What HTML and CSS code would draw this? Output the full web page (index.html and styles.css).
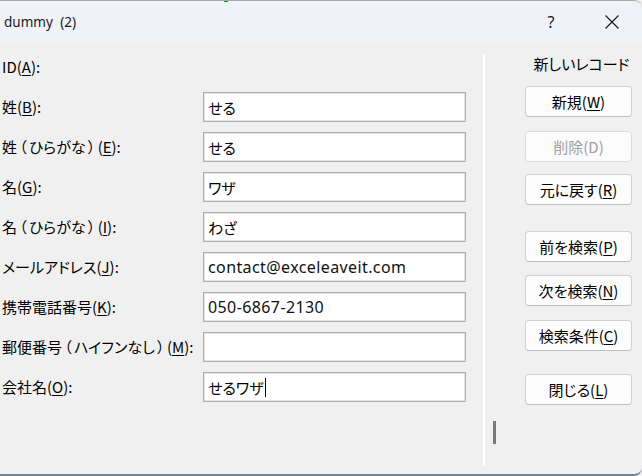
FILE: index.html
```html
<!DOCTYPE html>
<html lang="ja">
<head>
<meta charset="utf-8">
<title>dummy (2)</title>
<link rel="stylesheet" href="styles.css">
</head>
<body>
<div class="window">
  <div class="titlebar">
    <span class="green-mark"></span>
    <div class="title">dummy <span class="gap"></span>(2)</div>
    <div class="tb-btn help">?</div>
    <div class="tb-btn close">
      <svg width="16" height="16" viewBox="0 0 16 16"><path d="M1.5 1.5 L14.5 14.5 M14.5 1.5 L1.5 14.5" stroke="#1a1a1a" stroke-width="1.2" fill="none"/></svg>
    </div>
  </div>
  <div class="body">
    <div class="form">
      <div class="row"><div class="label">ID(<u>A</u>):</div></div>
      <div class="row"><div class="label">姓(<u>B</u>):</div><div class="field">せる</div></div>
      <div class="row"><div class="label">姓<span class="fp">（</span>ひらがな<span class="fp">）</span>(<u>E</u>):</div><div class="field">せる</div></div>
      <div class="row"><div class="label">名(<u>G</u>):</div><div class="field">ワザ</div></div>
      <div class="row"><div class="label">名<span class="fp">（</span>ひらがな<span class="fp">）</span>(<u>I</u>):</div><div class="field">わざ</div></div>
      <div class="row"><div class="label">メールアドレス(<u>J</u>):</div><div class="field latin">contact@exceleaveit.com</div></div>
      <div class="row"><div class="label">携帯電話番号(<u>K</u>):</div><div class="field latin">050-6867-2130</div></div>
      <div class="row"><div class="label">郵便番号<span class="fp">（</span>ハイフンなし<span class="fp">）</span>(<u>M</u>):</div><div class="field"></div></div>
      <div class="row"><div class="label">会社名(<u>O</u>):</div><div class="field">せるワザ<span class="caret"></span></div></div>
    </div>
    <div class="divider"></div>
    <div class="side">
      <div class="side-title">新しいレコード</div>
      <div class="btn b-new">新規(<u>W</u>)</div>
      <div class="btn b-del disabled">削除(D)</div>
      <div class="btn b-undo">元に戻す(<u>R</u>)</div>
      <div class="btn b-prev">前を検索(<u>P</u>)</div>
      <div class="btn b-next">次を検索(<u>N</u>)</div>
      <div class="btn b-crit">検索条件(<u>C</u>)</div>
      <div class="btn b-close">閉じる(<u>L</u>)</div>
      <div class="side-caret"></div>
    </div>
  </div>
</div>
</body>
</html>
```

FILE: styles.css
```css
html, body {
  margin: 0;
  padding: 0;
  background: #f0f0f0;
}
body {
  font-family: "Noto Sans CJK JP", "Noto Sans", sans-serif;
  font-size: 15px;
  color: #000;
  font-feature-settings: "palt";
}
.window {
  position: relative;
  width: 642px;
  height: 476px;
  box-sizing: border-box;
  display: flex;
  flex-direction: column;
  background: #f0f0f0;
  border-top: 1px solid #a9a9a9;
  border-bottom: 2px solid #76828d;
  border-top-right-radius: 8px;
  border-bottom-right-radius: 8px;
  overflow: hidden;
}
.titlebar {
  height: 41px;
  flex: none;
  display: flex;
  align-items: center;
  background: #eff3f8;
  position: relative;
}
.green-mark {
  position: absolute;
  left: 224px;
  top: -1px;
  width: 4px;
  height: 2px;
  background: #1f8a2e;
}
.title {
  flex: 1;
  padding-left: 4px;
  font-family: "Noto Sans", sans-serif;
  font-size: 13.5px;
  font-feature-settings: normal;
  color: #1a1a1a;
}
.title .gap {
  display: inline-block;
  width: 4px;
}
.tb-btn {
  height: 41px;
  display: flex;
  align-items: center;
  justify-content: center;
  color: #1a1a1a;
}
.help {
  width: 62px;
  font-family: "Noto Sans", sans-serif;
  font-size: 16px;
}
.close {
  width: 60px;
}
.body {
  flex: 1;
  display: flex;
}
.form {
  width: 483px;
  padding-top: 5px;
  box-sizing: border-box;
}
.row {
  height: 40px;
  display: flex;
  align-items: center;
}
.label {
  width: 203px;
  flex: none;
  padding-left: 2px;
  box-sizing: border-box;
  white-space: nowrap;
  line-height: 20px;
}
.fp {
  display: inline-block;
  width: 12px;
  text-align: center;
}
.label u, .btn u {
  text-underline-offset: 2px;
  text-decoration-thickness: 1px;
}
.field {
  width: 263px;
  height: 30px;
  box-sizing: border-box;
  background: #fff;
  border: 1px solid #aeaeae;
  box-shadow: inset 0 0 0 1px #e4e4e4;
  padding-left: 4px;
  display: flex;
  align-items: center;
  white-space: nowrap;
}
.field.latin {
  font-family: "Noto Sans", sans-serif;
  font-size: 16px;
  letter-spacing: 0.4px;
  font-feature-settings: normal;
  color: #111;
}
.caret {
  display: inline-block;
  width: 1px;
  height: 19px;
  background: #000;
  margin-left: 1px;
}
.divider {
  width: 2px;
  margin: 12px 0 8px;
  background: #ffffff;
}
.side {
  flex: 1;
  display: flex;
  flex-direction: column;
  padding-left: 40px;
  padding-top: 12px;
}
.side-title {
  width: 107px;
  text-align: center;
  line-height: 20px;
  padding-left: 6px;
  box-sizing: border-box;
}
.btn {
  width: 107px;
  height: 31px;
  box-sizing: border-box;
  background: #fdfdfd;
  border: 1px solid #d0d0d0;
  border-bottom-color: #bfbfbf;
  border-radius: 4px;
  display: flex;
  align-items: center;
  justify-content: center;
  white-space: nowrap;
}
.btn.disabled {
  color: #a0a0a0;
  background: #fbfbfb;
  border-color: #dcdcdc;
}
.b-new { margin-top: 12px; }
.b-del { margin-top: 14px; }
.b-undo { margin-top: 12px; }
.b-prev { margin-top: 26px; }
.b-next { margin-top: 13px; }
.b-crit { margin-top: 14px; }
.b-close { margin-top: 23px; }
.side-caret {
  width: 3px;
  height: 23px;
  margin-top: 16px;
  margin-left: -32px;
  background: #7a7a7a;
}
```
